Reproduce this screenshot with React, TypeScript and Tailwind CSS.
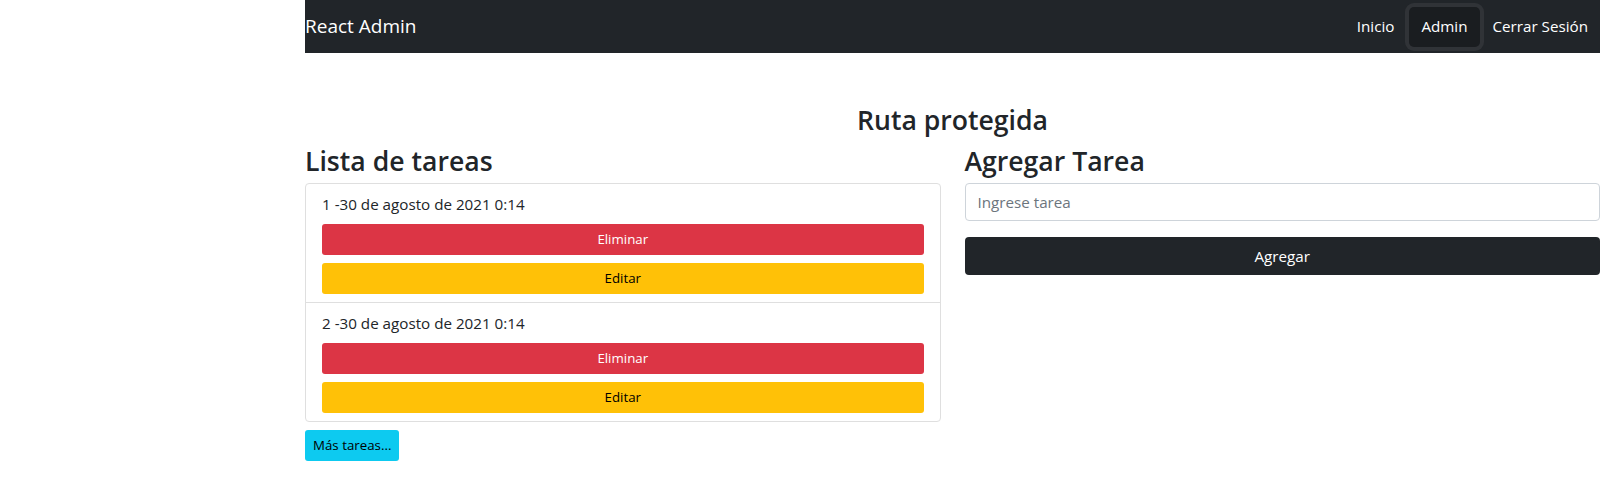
const tareas = [
  { id: 1, fecha: "30 de agosto de 2021 0:14" },
  { id: 2, fecha: "30 de agosto de 2021 0:14" },
];

const font = { fontFamily: '"Open Sans", "Noto Sans", Arial, sans-serif' };

const App = () => {
  return (
    <div style={font} className="min-h-screen bg-white text-[#212529]">
      <div className="ml-[305px] w-[1295px]">
        {/* NAVBAR */}
        <nav className="h-[53px] bg-[#212529] flex items-center justify-between">
          <span className="text-[19px] text-white leading-none">React Admin</span>
          <div className="flex items-center pr-[4px] text-[15.2px] text-white">
            <span className="px-2">Inicio</span>
            <span className="ml-[7px] h-[40px] px-3 flex items-center rounded-[5px] bg-[#1a1d20] ring-4 ring-[#303337]">
              Admin
            </span>
            <span className="ml-[5px] px-2">Cerrar Sesión</span>
          </div>
        </nav>

        {/* CONTENIDO */}
        <div className="pt-[51px]">
          <h3 className="h-[31px] text-center text-[26.6px] leading-[33.6px] font-semibold">
            Ruta protegida
          </h3>

          <div className="grid grid-cols-2 gap-6">
            {/* LISTA */}
            <div>
              <h2 className="pt-[4px] text-[26.6px] leading-[44px] font-semibold">
                Lista de tareas
              </h2>
              <ul className="border border-[#dfdfdf] rounded-[4px]">
                {tareas.map((t, i) => (
                  <li
                    key={t.id}
                    className={`px-4 py-2 ${i > 0 ? "border-t border-[#dfdfdf]" : ""}`}
                  >
                    <div className="text-[15.2px] leading-6">
                      {t.id} -{t.fecha}
                    </div>
                    <button className="mt-2 w-full h-[31px] rounded-[3px] bg-[#dc3545] text-white text-[13.3px]">
                      Eliminar
                    </button>
                    <button className="mt-2 w-full h-[31px] rounded-[3px] bg-[#ffc107] text-black text-[13.3px]">
                      Editar
                    </button>
                  </li>
                ))}
              </ul>
              <button className="mt-2 h-[31px] px-2 rounded-[3px] bg-[#0dcaf0] text-black text-[13.3px]">
                Más tareas...
              </button>
            </div>

            {/* FORM */}
            <div>
              <h2 className="pt-[4px] text-[26.6px] leading-[44px] font-semibold">
                Agregar Tarea
              </h2>
              <form>
                <input
                  placeholder="Ingrese tarea"
                  className="w-full h-[38px] px-3 border border-[#ced4da] rounded-[4px] text-[15.2px] outline-none placeholder:text-[#6c757d]"
                />
                <button
                  type="button"
                  className="mt-4 w-full h-[38px] rounded-[4px] bg-[#212529] text-white text-[15.2px]"
                >
                  Agregar
                </button>
              </form>
            </div>
          </div>
        </div>
      </div>
    </div>
  );
};

export default App;
